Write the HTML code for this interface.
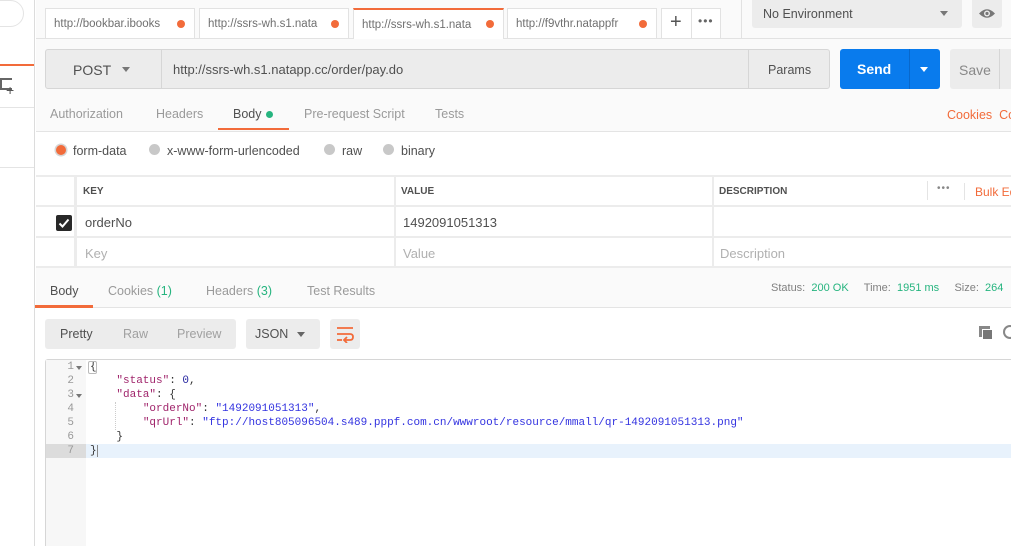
<!DOCTYPE html>
<html><head><meta charset="utf-8"><style>
*{box-sizing:border-box;margin:0;padding:0}
body{width:1011px;height:546px;overflow:hidden;background:#fff;font-family:"Liberation Sans",sans-serif;font-size:12px;color:#505050;position:relative;white-space:nowrap}
.a{position:absolute}
.mono{font-family:"Liberation Mono",monospace;font-size:11px}
.tab{position:absolute;top:8px;height:30px;background:#fff;border:1px solid #e2e2e2;border-bottom:none;font-size:11.5px;color:#707070;padding:9px 0 0 8px;white-space:nowrap;overflow:hidden}
.dot{position:absolute;width:8px;height:8px;border-radius:50%;background:#f26b3a}
</style></head><body>
<div class="a" style="left:0;top:0;width:35px;height:546px;background:#fff;border-right:1px solid #dcdcdc"></div>
<div class="a" style="left:-20px;top:0;width:44px;height:27px;border:1px solid #e4e4e4;border-radius:14px;background:#fff"></div>
<div class="a" style="left:0;top:64px;width:34px;height:2px;background:#f26b3a"></div>
<div class="a" style="left:0;top:78px;width:12px;height:12px;border:2px solid #666;border-right:none;border-top-color:#666"></div>
<div class="a" style="left:6px;top:84px;font-size:14px;color:#555;line-height:12px">+</div>
<div class="a" style="left:0;top:107px;width:34px;height:1px;background:#e4e4e4"></div>
<div class="a" style="left:0;top:167px;width:34px;height:1px;background:#e4e4e4"></div>
<div class="a" style="left:36px;top:0;width:975px;height:131px;background:#fafafa"></div>
<div class="a" style="left:36px;top:38px;width:975px;height:1px;background:#e2e2e2"></div>
<div class="tab" style="left:45px;width:150px">http://bookbar.ibooks<span class="dot" style="left:131px;top:11px"></span></div>
<div class="tab" style="left:199px;width:150px">http://ssrs-wh.s1.nata<span class="dot" style="left:131px;top:11px"></span></div>
<div class="tab" style="left:353px;width:151px;height:31px;border-top:2px solid #f26b3a">http://ssrs-wh.s1.nata<span class="dot" style="left:132px;top:10px"></span></div>
<div class="tab" style="left:507px;width:150px">http://f9vthr.natappfr<span class="dot" style="left:131px;top:11px"></span></div>
<div class="tab" style="left:661px;width:60px;padding:0"><div class="a" style="left:8px;top:2px;font-size:20px;color:#555">+</div><div class="a" style="left:29px;top:0;width:1px;height:30px;background:#e2e2e2"></div><div class="a" style="left:36px;top:5px;font-size:12px;color:#666;letter-spacing:1px">•••</div></div>
<div class="a" style="left:741px;top:0;width:1px;height:38px;background:#e2e2e2"></div>
<div class="a" style="left:752px;top:0;width:210px;height:28px;background:#ececec;border-radius:0 0 3px 3px;padding:7px 11px;font-size:12.5px;color:#505050">No Environment</div>
<div class="a" style="left:940px;top:11px;width:0;height:0;border:4px solid transparent;border-top:5px solid #777"></div>
<div class="a" style="left:972px;top:0;width:30px;height:28px;background:#ececec;border-radius:0 0 3px 3px"></div>
<svg class="a" style="left:978px;top:7px" width="18" height="13"><path d="M1 6.5Q9 -2 17 6.5Q9 15 1 6.5Z" fill="#777"/><circle cx="9" cy="6.5" r="3" fill="#ececec"/><circle cx="9" cy="6.5" r="1.6" fill="#777"/></svg>
<div class="a" style="left:45px;top:49px;width:785px;height:40px;background:#ececec;border:1px solid #d6d6d6;border-radius:3px"></div>
<div class="a" style="left:161px;top:49px;width:1px;height:40px;background:#d6d6d6"></div>
<div class="a" style="left:748px;top:49px;width:1px;height:40px;background:#d6d6d6"></div>
<div class="a" style="left:73px;top:62px;font-size:14px;color:#505050">POST</div>
<div class="a" style="left:122px;top:67px;border:4px solid transparent;border-top:5px solid #777"></div>
<div class="a" style="left:173px;top:62px;font-size:13px;color:#505050">http://ssrs-wh.s1.natapp.cc/order/pay.do</div>
<div class="a" style="left:768px;top:63px;font-size:12.5px;color:#505050">Params</div>
<div class="a" style="left:840px;top:49px;width:100px;height:40px;background:#097bed;border-radius:3px"></div>
<div class="a" style="left:909px;top:49px;width:1px;height:40px;background:#0868cc"></div>
<div class="a" style="left:857px;top:61px;font-size:14px;font-weight:bold;color:#fff">Send</div>
<div class="a" style="left:920px;top:67px;border:4px solid transparent;border-top:5px solid #fff"></div>
<div class="a" style="left:950px;top:49px;width:70px;height:40px;background:#ececec;border-radius:3px"></div>
<div class="a" style="left:999px;top:49px;width:1px;height:40px;background:#d6d6d6"></div>
<div class="a" style="left:959px;top:62px;font-size:14px;color:#888">Save</div>
<div class="a" style="left:50px;top:107px;font-size:12.5px;color:#9a9a9a">Authorization</div>
<div class="a" style="left:156px;top:107px;font-size:12.5px;color:#9a9a9a">Headers</div>
<div class="a" style="left:233px;top:107px;font-size:12.5px;color:#505050">Body</div>
<div class="dot" style="left:266px;top:111px;background:#26b47f;width:7px;height:7px"></div>
<div class="a" style="left:218px;top:128px;width:71px;height:2px;background:#f26b3a"></div>
<div class="a" style="left:304px;top:107px;font-size:12.5px;color:#9a9a9a">Pre-request Script</div>
<div class="a" style="left:435px;top:107px;font-size:12.5px;color:#9a9a9a">Tests</div>
<div class="a" style="left:947px;top:108px;font-size:12.5px;color:#f26b3a">Cookies&nbsp;&nbsp;Co</div>
<div class="a" style="left:36px;top:131px;width:975px;height:1px;background:#e4e4e4"></div>
<div class="a" style="left:56px;top:145px;width:10px;height:10px;border-radius:50%;background:#f26b3a;box-shadow:0 0 0 1.5px #d6d6d6"></div>
<div class="a" style="left:73px;top:144px;font-size:12.5px">form-data</div>
<div class="a" style="left:149px;top:144px;width:11px;height:11px;border-radius:50%;background:#c8c8c8"></div>
<div class="a" style="left:167px;top:144px;font-size:12.5px">x-www-form-urlencoded</div>
<div class="a" style="left:324px;top:144px;width:11px;height:11px;border-radius:50%;background:#c8c8c8"></div>
<div class="a" style="left:342px;top:144px;font-size:12.5px">raw</div>
<div class="a" style="left:383px;top:144px;width:11px;height:11px;border-radius:50%;background:#c8c8c8"></div>
<div class="a" style="left:401px;top:144px;font-size:12.5px">binary</div>
<div class="a" style="left:36px;top:175px;width:975px;height:2px;background:#ececec"></div>
<div class="a" style="left:36px;top:205px;width:975px;height:2px;background:#ececec"></div>
<div class="a" style="left:36px;top:236px;width:975px;height:2px;background:#ececec"></div>
<div class="a" style="left:36px;top:266px;width:975px;height:2px;background:#ececec"></div>
<div class="a" style="left:74px;top:175px;width:3px;height:92px;background:#ececec"></div>
<div class="a" style="left:394px;top:175px;width:2px;height:92px;background:#ececec"></div>
<div class="a" style="left:712px;top:175px;width:2px;height:92px;background:#ececec"></div>
<div class="a" style="left:927px;top:181px;width:1px;height:19px;background:#e4e4e4"></div>
<div class="a" style="left:964px;top:183px;width:1px;height:17px;background:#e4e4e4"></div>
<div class="a" style="left:83px;top:186px;font-size:10px;font-weight:bold;color:#505050">KEY</div>
<div class="a" style="left:401px;top:186px;font-size:10px;font-weight:bold;color:#505050">VALUE</div>
<div class="a" style="left:719px;top:186px;font-size:10px;font-weight:bold;color:#505050">DESCRIPTION</div>
<div class="a" style="left:937px;top:183px;font-size:10px;color:#888;letter-spacing:1px">•••</div>
<div class="a" style="left:975px;top:185px;font-size:12px;color:#f26b3a">Bulk Ed</div>
<div class="a" style="left:56px;top:215px;width:16px;height:16px;border-radius:2px;background:#282828"></div>
<svg class="a" style="left:56px;top:215px" width="16" height="16"><path d="M3.5 8.5L6.5 11.5L12.5 4.5" stroke="#fff" stroke-width="2" fill="none"/></svg>
<div class="a" style="left:85px;top:215px;font-size:13px">orderNo</div>
<div class="a" style="left:403px;top:215px;font-size:13px">1492091051313</div>
<div class="a" style="left:85px;top:246px;font-size:13px;color:#b0b0b0">Key</div>
<div class="a" style="left:403px;top:246px;font-size:13px;color:#b0b0b0">Value</div>
<div class="a" style="left:720px;top:246px;font-size:13px;color:#b0b0b0">Description</div>
<div class="a" style="left:36px;top:268px;width:975px;height:40px;background:#fafafa;border-bottom:1px solid #e4e4e4"></div>
<div class="a" style="left:50px;top:284px;font-size:12.5px">Body</div>
<div class="a" style="left:35px;top:305px;width:58px;height:3px;background:#f26b3a"></div>
<div class="a" style="left:108px;top:284px;font-size:12.5px;color:#9a9a9a">Cookies <span style="color:#26b47f">(1)</span></div>
<div class="a" style="left:206px;top:284px;font-size:12.5px;color:#9a9a9a">Headers <span style="color:#26b47f">(3)</span></div>
<div class="a" style="left:307px;top:284px;font-size:12.5px;color:#9a9a9a">Test Results</div>
<div class="a" style="left:771px;top:282px;font-size:11px;color:#808080">Status:&nbsp; <span style="color:#26b47f">200 OK</span>&nbsp;&nbsp;&nbsp;&nbsp; Time:&nbsp; <span style="color:#26b47f">1951 ms</span>&nbsp;&nbsp;&nbsp;&nbsp; Size:&nbsp; <span style="color:#26b47f">264</span></div>
<div class="a" style="left:45px;top:319px;width:191px;height:30px;background:#ececec;border-radius:3px"></div>
<div class="a" style="left:60px;top:327px;font-size:12.5px">Pretty</div>
<div class="a" style="left:123px;top:327px;font-size:12.5px;color:#a0a0a0">Raw</div>
<div class="a" style="left:177px;top:327px;font-size:12.5px;color:#a0a0a0">Preview</div>
<div class="a" style="left:246px;top:319px;width:74px;height:30px;background:#ececec;border-radius:3px"></div>
<div class="a" style="left:255px;top:327px;font-size:12.5px">JSON</div>
<div class="a" style="left:297px;top:332px;border:4px solid transparent;border-top:5px solid #666"></div>
<div class="a" style="left:330px;top:319px;width:30px;height:30px;background:#ececec;border-radius:3px"></div>
<svg class="a" style="left:336px;top:325px" width="18" height="18"><path d="M1 3H17M1 9H14Q17 9 17 12Q17 15 14 15H9M1 15H6M11 12L8 15L11 18" stroke="#f26b3a" stroke-width="1.8" fill="none"/></svg>
<div class="a" style="left:979px;top:326px;width:11px;height:11px;background:#888"></div>
<div class="a" style="left:982px;top:329px;width:11px;height:11px;background:#777;border:1px solid #fff"></div>
<div class="a" style="left:1003px;top:325px;width:14px;height:14px;border:2px solid #888;border-radius:50%"></div>
<div class="a" style="left:45px;top:359px;width:966px;height:187px;border:1px solid #d6d6d6;border-bottom:none;border-right:none;border-radius:3px 0 0 0"></div>
<div class="a" style="left:46px;top:360px;width:40px;height:186px;background:#f7f7f7"></div>
<div class="a" style="left:86px;top:444px;width:925px;height:14px;background:#e8f2fc"></div>
<div class="a" style="left:46px;top:444px;width:40px;height:14px;background:#dcdcdc"></div>
<div class="a" style="left:115px;top:402px;width:0;height:28px;border-left:1px dotted #ccc"></div>
<div class="a mono" style="left:46px;top:360px;width:28px;text-align:right;line-height:14px;color:#999">1<br>2<br>3<br>4<br>5<br>6<br>7</div>
<div class="a" style="left:76px;top:366px;border:3px solid transparent;border-top:4px solid #777"></div>
<div class="a" style="left:76px;top:394px;border:3px solid transparent;border-top:4px solid #777"></div>
<pre class="a mono" style="left:90px;top:360px;line-height:14px;color:#333">{
    <span style="color:#a0246b">"status"</span>: <span style="color:#2424a0">0</span>,
    <span style="color:#a0246b">"data"</span>: {
        <span style="color:#a0246b">"orderNo"</span>: <span style="color:#3333e0">"1492091051313"</span>,
        <span style="color:#a0246b">"qrUrl"</span>: <span style="color:#3333e0">"ftp://host805096504.s489.pppf.com.cn/wwwroot/resource/mmall/qr-1492091051313.png"</span>
    }
}</pre>
<div class="a" style="left:88px;top:361px;width:9px;height:13px;border:1px solid #bbb;border-radius:2px"></div>
<div class="a" style="left:97px;top:445px;width:1px;height:12px;background:#888"></div>
</body></html>
